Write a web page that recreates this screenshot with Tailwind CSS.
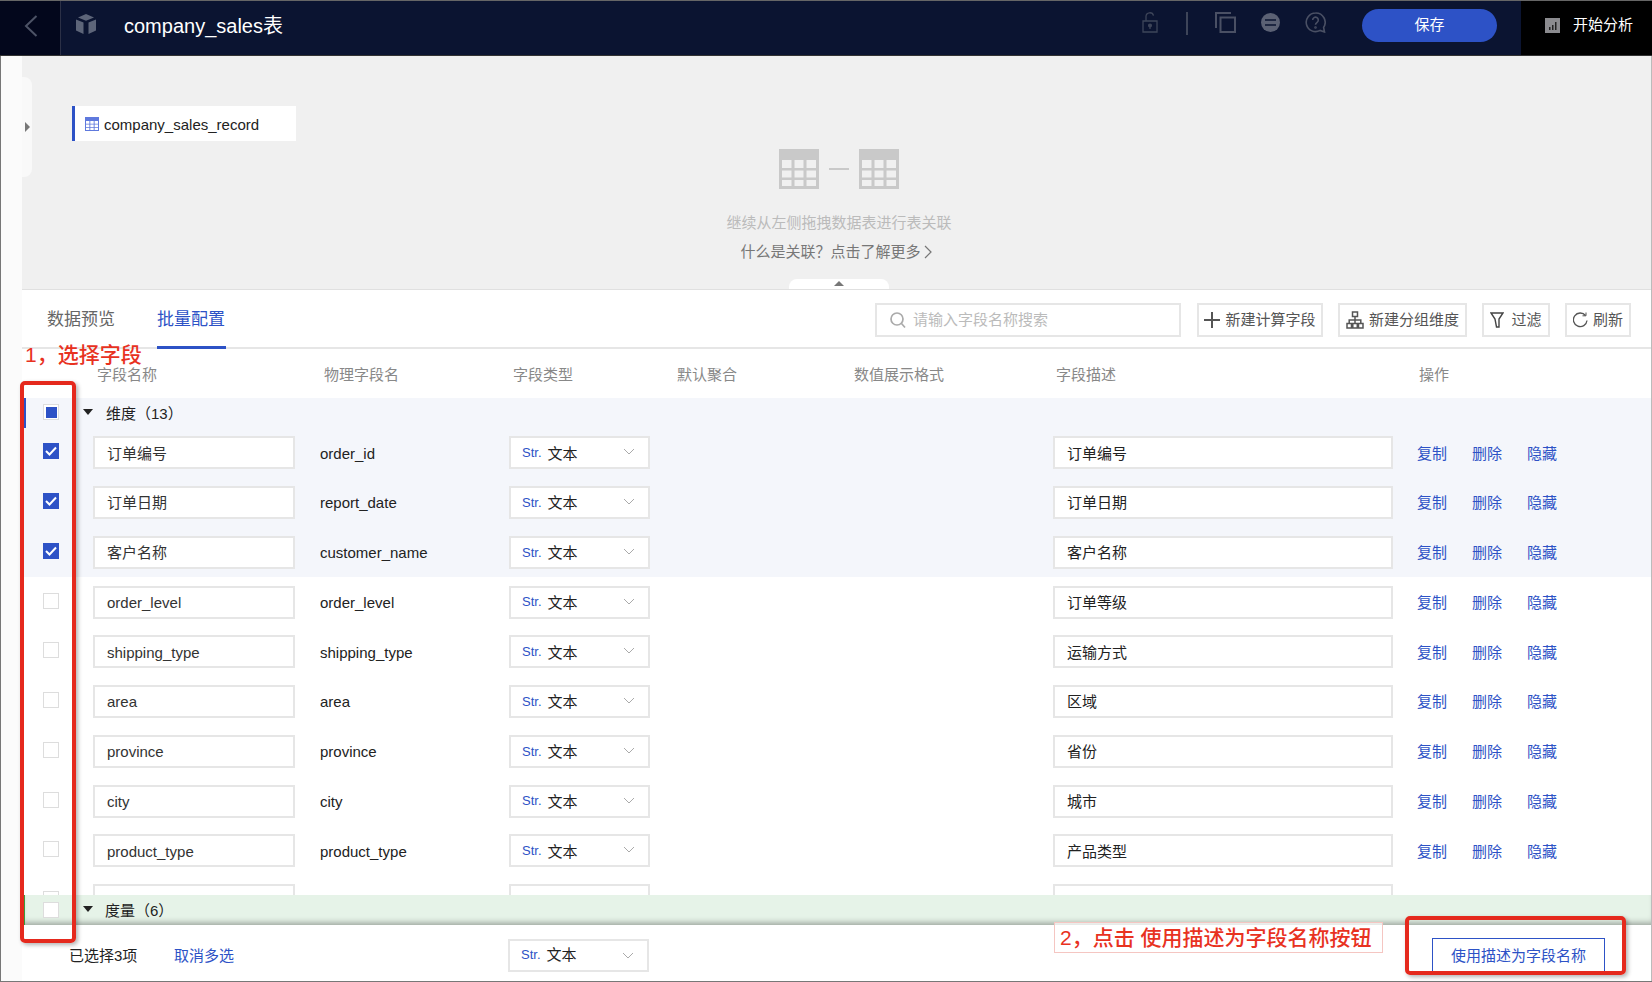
<!DOCTYPE html>
<html lang="zh-CN">
<head>
  <meta charset="UTF-8" />
  <title>company_sales表</title>
  <script src="https://cdn.jsdelivr.net/npm/@tailwindcss/browser@4"></script>
</head>
<body class="bg-white font-['Liberation_Sans','Noto_Sans_CJK_SC',sans-serif] text-[15px] text-[#222]">
<div class="relative w-[1652px] h-[982px] overflow-hidden flex flex-col border-t border-[#666]">

  <!-- top bar -->
  <header class="h-[55px] shrink-0 flex items-center bg-[#0b1431] border-b border-[#333]">
    <div class="w-[61px] h-full flex items-center pl-6 pb-[4px] bg-[#03071c] border-r border-[#2b3046]">
      <svg class="w-[14px] h-[22px]" viewBox="0 0 14 22" fill="none" stroke="#4d5366" stroke-width="2"><path d="M12.5 1L2 11l10.5 10"/></svg>
    </div>
    <svg class="ml-[15px] w-[20px] h-[20px] -mt-[8px]" viewBox="0 0 20 20" fill="#5d6579"><path d="M10 0l8 3.4-8 3.3-8-3.3z"/><path d="M0 5.4l7.5 3V20L0 16.5z"/><path d="M20 5.4l-7.5 3V20l7.5-3.5z"/></svg>
    <div class="ml-[28px] text-[20px] text-white -mt-[5px]">company_sales表</div>
    <div class="ml-auto flex items-center h-full">
      <svg class="w-[16px] h-[21px] -mt-[11px]" viewBox="0 0 16 21" fill="none" stroke="#3e4559" stroke-width="1.3"><path d="M1 9h14v11H1z"/><path d="M4 9V4.5a3.8 3.8 0 0 1 7.5-.8"/><circle cx="8" cy="13.5" r="1.4" fill="#3e4559"/><path d="M8 14v3"/></svg>
      <div class="ml-[28px] w-[2px] h-[23px] bg-[#3e4559] -mt-[9px]"></div>
      <svg class="ml-[27px] w-[21px] h-[21px] -mt-[11px]" viewBox="0 0 21 21" fill="none" stroke="#4a5064" stroke-width="2"><path d="M1 16V1h15"/><path d="M5.500 5.500H20V20H5.500z"/></svg>
      <svg class="ml-[25px] w-[19px] h-[19px] -mt-[11px]" viewBox="0 0 19 19"><circle cx="9.500" cy="9.500" r="9.500" fill="#5b6174"/><path d="M4 7h11M4 12h11" stroke="#0b1431" stroke-width="1.700"/></svg>
      <svg class="ml-[25px] w-[21px] h-[21px] -mt-[11px]" viewBox="0 0 21 21" fill="none" stroke="#4a5064" stroke-width="1.600"><path d="M10.500 1a9.300 9.300 0 1 0 4.600 17.400L19.500 20l-.9-4.600A9.300 9.300 0 0 0 10.500 1z"/><path d="M7.700 8a2.800 2.800 0 1 1 4.400 2.300c-1 .7-1.600 1.200-1.600 2.500"/><circle cx="10.500" cy="15.500" r=".5"/></svg>
      <button class="ml-[36px] w-[135px] h-[33px] -mt-[6px] rounded-full bg-[#2d52c6] text-white text-[15px]">保存</button>
      <div class="ml-[24px] w-[131px] h-full bg-black flex items-center pl-6 pb-[5px] text-white">
        <svg class="w-[15px] h-[15px] shrink-0" viewBox="0 0 15 15"><path d="M0 0h15v15H0z" fill="#8b8b8f"/><path d="M4 9h1.500v3H4zM7 7h1.500v5H7zM10 4h1.500v8H10z" fill="#222"/></svg>
        <span class="ml-[13px]">开始分析</span>
      </div>
    </div>
  </header>

  <div class="flex-1 min-h-0 flex border-b border-[#777]">
    <div class="w-[22px] shrink-0 bg-[#fbfbfb] border-l border-[#777]"></div>
    <main class="flex-1 min-w-0 flex flex-col border-r border-[#bbb]">

      <!-- canvas -->
      <section class="relative h-[234px] shrink-0 bg-[#f0f0f0] border-b border-[#e0e0e0]">
        <div class="absolute left-0 top-[21px] w-[10px] h-[100px] bg-[#f9f9f9] rounded-r-lg flex items-center">
          <div class="w-0 h-0 ml-[3px] border-y-[5px] border-y-transparent border-l-[5px] border-l-[#777]"></div>
        </div>
        <div class="absolute left-[50px] top-[50px] w-[224px] h-[35px] bg-white border-l-[3px] border-[#2d52c6] flex items-center pl-[10px]">
          <svg class="w-[14px] h-[14px] shrink-0" viewBox="0 0 14 14"><path d="M0 0h14v14H0z" fill="#5f79dd"/><path d="M1 4h3.400v2.700H1zM5.300 4h3.400v2.700H5.300zM9.600 4H13v2.700H9.600zM1 7.500h3.400v2.700H1zM5.300 7.500h3.400v2.700H5.300zM9.600 7.500H13v2.700H9.600zM1 11h3.400v2H1zM5.300 11h3.400v2H5.300zM9.600 11H13v2H9.600z" fill="#fff"/></svg>
          <span class="ml-[5px] mt-[4px] text-[15px] text-[#222]">company_sales_record</span>
        </div>
        <div class="flex flex-col items-center pt-[93px] text-[15px] ml-[-1px]">
          <div class="flex items-center ml-[6px]">
            <svg class="w-[40px] h-[40px]" viewBox="0 0 40 40"><path d="M0 0h40v40H0z" fill="#c9c9c9"/><path d="M3 11h9.500v8H3zM15.500 11h9v8h-9zM27.500 11H37v8h-9.500zM3 21.500h9.500v7H3zM15.500 21.500h9v7h-9zM27.500 21.500H37v7h-9.500zM3 31h9.500v6H3zM15.500 31h9v6h-9zM27.500 31H37v6h-9.500z" fill="#f0f0f0"/></svg>
            <div class="w-[20px] h-[2px] bg-[#c9c9c9] mx-[10px]"></div>
            <svg class="w-[40px] h-[40px]" viewBox="0 0 40 40"><path d="M0 0h40v40H0z" fill="#c9c9c9"/><path d="M3 11h9.500v8H3zM15.500 11h9v8h-9zM27.500 11H37v8h-9.500zM3 21.500h9.500v7H3zM15.500 21.500h9v7h-9zM27.500 21.500H37v7h-9.500zM3 31h9.500v6H3zM15.500 31h9v6h-9zM27.500 31H37v6h-9.500z" fill="#f0f0f0"/></svg>
          </div>
          <div class="mt-[23px] ml-[6px] leading-[22px] text-[#bbb]">继续从左侧拖拽数据表进行表关联</div>
          <div class="mt-[7px] leading-[22px] text-[#777] flex items-center">什么是关联？点击了解更多
            <svg class="w-[8px] h-[14px] ml-[3px]" viewBox="0 0 8 14" fill="none" stroke="#777" stroke-width="1.200"><path d="M1 1l6 6-6 6"/></svg>
          </div>
        </div>
        <div class="absolute left-[767px] bottom-0 w-[100px] h-[10px] bg-white rounded-t-lg flex justify-center pt-[2px]">
          <div class="w-0 h-0 border-x-[5px] border-x-transparent border-b-[5px] border-b-[#777]"></div>
        </div>
      </section>

      <!-- tabs + toolbar -->
      <div class="h-[59px] shrink-0 flex items-center border-b-2 border-[#e6e6e6] pl-[25px]">
        <div class="w-[69px] text-[17px] text-[#666] whitespace-nowrap mt-[2px]">数据预览</div>
        <div class="relative h-full ml-[41px] w-[69px] flex items-center text-[17px] text-[#2d52c6] whitespace-nowrap">
          <span class="mt-[2px]">批量配置</span>
          <div class="absolute left-0 right-0 -bottom-[2px] h-[3px] bg-[#2d52c6]"></div>
        </div>
        <div class="ml-[649px] w-[306px] h-[34px] mt-[3px] border-2 border-[#e6e6e6] flex items-center pl-[13px] text-[#bbb]">
          <svg class="w-[16px] h-[17px]" viewBox="0 0 16 17" fill="none" stroke="#aaa" stroke-width="1.700"><circle cx="7" cy="7" r="6"/><path d="M11.500 11.500l3.500 4"/></svg>
          <span class="ml-[7px]">请输入字段名称搜索</span>
        </div>
        <button class="ml-[16px] w-[126px] h-[34px] mt-[3px] border-2 border-[#e6e6e6] flex items-center justify-center text-[#555]">
          <svg class="w-[16px] h-[16px] mr-[5px]" viewBox="0 0 16 16" fill="none" stroke="#555" stroke-width="2"><path d="M8 0v16M0 8h16"/></svg>新建计算字段
        </button>
        <button class="ml-[15px] w-[129px] h-[34px] mt-[3px] border-2 border-[#e6e6e6] flex items-center justify-center text-[#555]">
          <svg class="w-[18px] h-[18px] mr-[5px]" viewBox="0 0 18 18" fill="none" stroke="#555" stroke-width="1.500"><path d="M6.500 1h5v4.500h-5zM1 12.500h4.500V17H1zM6.800 12.500h4.500V17H6.800zM12.500 12.500H17V17h-4.500zM9 5.500v7M3.200 12.500V9h11.600v3.500"/></svg>新建分组维度
        </button>
        <button class="ml-[15px] w-[68px] h-[34px] mt-[3px] border-2 border-[#e6e6e6] flex items-center justify-center text-[#555]">
          <svg class="w-[14px] h-[16px] mr-[7px]" viewBox="0 0 14 16" fill="none" stroke="#444" stroke-width="1.400"><path d="M1 1h12L9 7v8H6.500L5 7z"/></svg>过滤
        </button>
        <button class="ml-[15px] w-[66px] h-[34px] mt-[3px] border-2 border-[#e6e6e6] flex items-center justify-center text-[#555]">
          <svg class="w-[15px] h-[16px] mr-[5px]" viewBox="0 0 15 16" fill="none" stroke="#555" stroke-width="1.300"><path d="M12.500 3.500A6.800 6.800 0 1 0 14 8.500"/><path d="M9.500 3.800h3.500V.5" stroke-width="1"/></svg>刷新
        </button>
      </div>

      <!-- column heads -->
      <div class="h-[49px] shrink-0 flex items-center pl-[75px] pt-[4px] text-[#888] text-[15px]">
        <div class="w-[227px]">字段名称</div>
        <div class="w-[189px]">物理字段名</div>
        <div class="w-[164px]">字段类型</div>
        <div class="w-[177px]">默认聚合</div>
        <div class="w-[202px]">数值展示格式</div>
        <div class="w-[363px]">字段描述</div>
        <div>操作</div>
      </div>

      <!-- rows -->
      <div class="flex-1 min-h-0 overflow-hidden">
        <div class="h-[30px] bg-[#f4f6fb] border-l-4 border-[#2d52c6] flex items-center pl-[17px]">
          <div class="w-[16px] h-[16px] bg-white border border-[#ddd] flex items-center justify-center -mt-[2px]"><div class="w-[11px] h-[11px] bg-[#2d52c6]"></div></div>
          <div class="ml-[24px] w-0 h-0 border-x-[5px] border-x-transparent border-t-[6px] border-t-[#222] -mt-[2px]"></div>
          <span class="ml-[13px] mt-[2px]">维度（13）</span>
        </div>
        <div id="rows"></div>
      </div>

      <!-- measures group -->
      <div class="h-[30px] shrink-0 bg-[#e6f3e8] border-l-[3px] border-[#3c9a3c] flex items-center pl-[18px] shadow-[inset_0_-6px_6px_-4px_rgba(0,0,0,0.35)]">
        <div class="w-[16px] h-[16px] bg-white border border-[#ddd]"></div>
        <div class="ml-[24px] w-0 h-0 border-x-[5px] border-x-transparent border-t-[6px] border-t-[#222] -mt-[2px]"></div>
        <span class="ml-[12px] mt-[2px]">度量（6）</span>
      </div>

      <!-- footer -->
      <div class="h-[56px] shrink-0 flex items-center pl-[47px] pt-[4px] whitespace-nowrap">
        <span class="w-[68px] mt-[2px]">已选择3项</span>
        <span class="ml-[37px] w-[59px] mt-[2px] text-[#2d52c6]">取消多选</span>
        <div class="ml-[275px] w-[141px] h-[33px] border-2 border-[#e6e6e6] flex items-center pl-[11px]">
          <span class="text-[13px] text-[#2d52c6]">Str.</span><span class="ml-[6px]">文本</span>
          <svg class="ml-auto mr-[13px] w-[12px] h-[7px]" viewBox="0 0 12 7" fill="none" stroke="#aaa"><path d="M1 1l5 5 5-5"/></svg>
        </div>
        <button class="ml-[783px] w-[173px] h-[35px] pt-[2px] border border-[#2d52c6] text-[#2d52c6] text-[15px]">使用描述为字段名称</button>
      </div>
    </main>
  </div>

  <!-- annotations over the page -->
  <div class="absolute left-[25px] top-[340px] text-[21px] leading-[28px] font-medium text-[#e8321f]">1，选择字段</div>
  <div class="absolute left-[20px] top-[380px] w-[56px] h-[562px] border-[4px] border-[#e5291d] rounded-[5px] shadow-[2px_2px_4px_rgba(0,0,0,0.3)]"></div>
  <div class="absolute left-[1054px] top-[921px] w-[329px] h-[31px] bg-white/70 border border-[#f5c6c2] pl-[5px] text-[21px] leading-[29px] font-medium text-[#e8321f] whitespace-pre">2，点击 使用描述为字段名称按钮</div>
  <div class="absolute left-[1405px] top-[915px] w-[221px] h-[59px] border-[4px] border-[#e5291d] rounded-[5px] shadow-[2px_2px_4px_rgba(0,0,0,0.3)]"></div>
</div>

<script>
  const rows = [
    ['订单编号', 'order_id', '订单编号', true],
    ['订单日期', 'report_date', '订单日期', true],
    ['客户名称', 'customer_name', '客户名称', true],
    ['order_level', 'order_level', '订单等级', false],
    ['shipping_type', 'shipping_type', '运输方式', false],
    ['area', 'area', '区域', false],
    ['province', 'province', '省份', false],
    ['city', 'city', '城市', false],
    ['product_type', 'product_type', '产品类型', false],
  ];
  const check = '<svg class="w-[16px] h-[16px]" viewBox="0 0 16 16"><path d="M0 0h16v16H0z" fill="#2d52c6"/><path d="M3 8l3.500 3.500L13 4.500" fill="none" stroke="#fff" stroke-width="2"/></svg>';
  document.getElementById('rows').innerHTML = rows.map(([name, field, desc, on]) => `
    <div class="h-[49.75px] flex items-center pl-[21px] ${on ? 'bg-[#f4f6fb]' : ''}">
      ${on ? `<div class="w-[16px] h-[16px] -mt-[3px]">${check}</div>` : '<div class="w-[16px] h-[16px] -mt-[3px] bg-white border border-[#ddd]"></div>'}
      <div class="ml-[34px] w-[202px] h-[33px] bg-white border-2 border-[#e6e6e6] flex items-center pl-[12px] pt-[2px] text-[#333]">${name}</div>
      <div class="ml-[25px] w-[189px] mt-[2px]">${field}</div>
      <div class="w-[141px] h-[33px] bg-white border-2 border-[#e6e6e6] flex items-center pl-[11px]">
        <span class="text-[13px] text-[#2d52c6]">Str.</span><span class="ml-[6px] mt-[2px]">文本</span>
        <svg class="ml-auto mr-[13px] w-[12px] h-[7px] -mt-[2px]" viewBox="0 0 12 7" fill="none" stroke="#aaa"><path d="M1 1l5 5 5-5"/></svg>
      </div>
      <div class="ml-[403px] w-[340px] h-[33px] bg-white border-2 border-[#e6e6e6] flex items-center pl-[12px] pt-[2px]">${desc}</div>
      <div class="ml-[24px] mt-[2px] flex gap-[25px] text-[#2d52c6]"><span>复制</span><span>删除</span><span>隐藏</span></div>
    </div>`).join('') + `
    <div class="h-[49.75px] flex items-center pl-[21px]">
      <div class="w-[16px] h-[16px] -mt-[3px] bg-white border border-[#ddd]"></div>
      <div class="ml-[34px] w-[202px] h-[33px] bg-white border-2 border-[#e6e6e6]"></div>
      <div class="ml-[214px] w-[141px] h-[33px] bg-white border-2 border-[#e6e6e6]"></div>
      <div class="ml-[403px] w-[340px] h-[33px] bg-white border-2 border-[#e6e6e6]"></div>
    </div>`;
</script>
</body>
</html>
